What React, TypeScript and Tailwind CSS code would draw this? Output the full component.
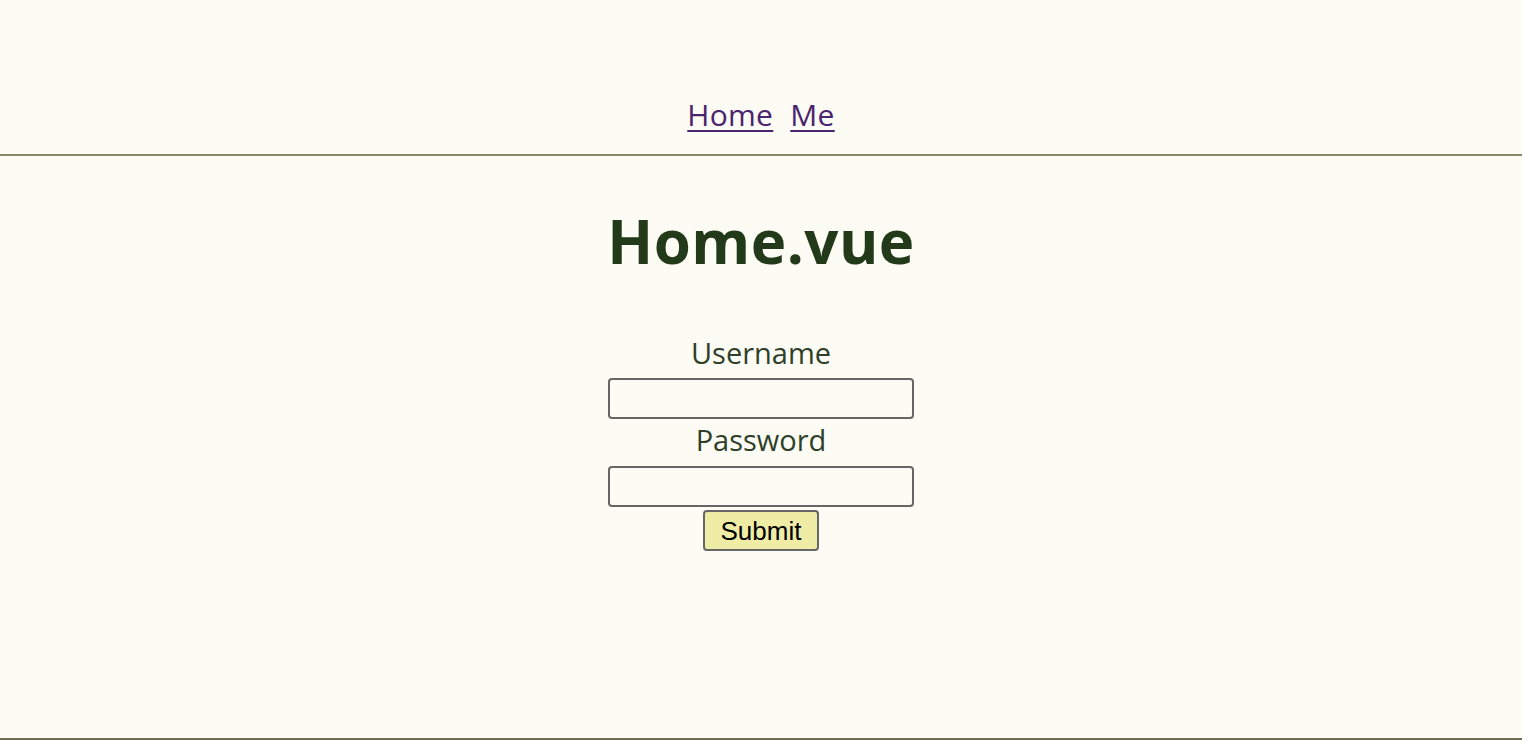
export default function App() {
  return (
    <div className="min-h-[740px] bg-[#fcfcf4] flex flex-col text-[#2a3a24] font-['Open_Sans',sans-serif]">
      {/* Nav */}
      <nav className="h-[156px] flex items-end justify-center gap-[17px] pb-[24px] border-b-2 border-[#8a8a6a] text-[30px] leading-none tracking-[0.3px]">
        <a href="#" className="text-[#4b2470] underline underline-offset-[4px] decoration-2">Home</a>
        <a href="#" className="text-[#4b2470] underline underline-offset-[4px] decoration-2">Me</a>
      </nav>

      {/* Content */}
      <main className="flex-1 flex flex-col items-center border-b-2 border-[#6e6e58]">
        <h1 className="mt-[55px] text-[60px] font-bold leading-none text-[#233a1a] tracking-[0.5px]">Home.vue</h1>

        <form className="mt-[65px] flex flex-col items-center" onSubmit={(e) => e.preventDefault()}>
          <label className="text-[29px] leading-[34px] text-[#2f3f2a]">Username</label>
          <input className="mt-[8px] w-[306px] h-[41px] border-2 border-[#666] rounded-[4px] bg-transparent" />
          <label className="mt-[4px] text-[29px] leading-[34px] text-[#2f3f2a]">Password</label>
          <input type="password" className="mt-[9px] w-[306px] h-[41px] border-2 border-[#666] rounded-[4px] bg-transparent" />
          <button className="mt-[3px] w-[116px] h-[41px] border-2 border-[#666] rounded-[4px] bg-[#efeca6] text-black text-[26px] font-['Liberation_Sans',sans-serif]">Submit</button>
        </form>
      </main>
    </div>
  );
}
